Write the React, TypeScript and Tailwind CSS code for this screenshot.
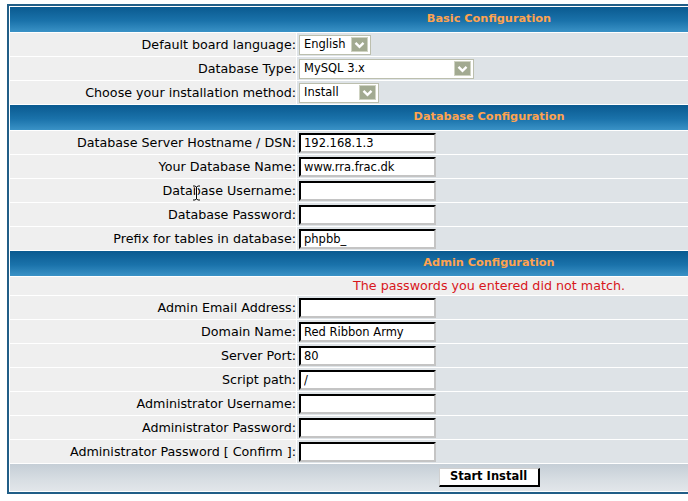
import React from "react";

type Field = { label: string; value?: string; kind?: "text" | "select"; selectWidth?: string };

function Header({ title }: { title: string }) {
  return (
    <div className="h-[25px] flex items-center justify-center bg-[linear-gradient(to_bottom,#0a5a90,#1a72aa_55%,#3a92c6)] text-[11.3px] font-bold text-[#FFA34F]">
      {title}
    </div>
  );
}

function Chevron() {
  return (
    <svg width="11" height="8" viewBox="0 0 11 8">
      <polyline points="1.5,1.8 5.5,5.8 9.5,1.8" fill="none" stroke="#ffffff" strokeWidth="2.4" />
    </svg>
  );
}

function SelectBox({ value, className }: { value: string; className: string }) {
  return (
    <div
      className={`h-[20px] border border-[#bcbfae] bg-white flex items-center justify-between pl-[4px] pr-[2px] text-[11.5px] text-black ${className}`}
    >
      <span>{value}</span>
      <span className="w-[17px] h-[15px] bg-[#a2aa91] border border-[#cfd3c2] flex items-center justify-center">
        <Chevron />
      </span>
    </div>
  );
}

function TextBox({ value }: { value?: string }) {
  return (
    <input
      readOnly
      defaultValue={value ?? ""}
      className="w-[137px] h-[20px] border-2 border-t-black border-l-black border-r-[#c4c4c4] border-b-[#c4c4c4] bg-white px-[3px] text-[11.5px] text-black outline-none"
    />
  );
}

function Row({ field }: { field: Field }) {
  return (
    <div className="flex gap-px h-[23px]">
      <div className="w-[286px] shrink-0 bg-[#EFEFEF] flex items-center justify-end text-[12.7px] text-black">
        {field.label}
      </div>
      <div className="flex-1 bg-[#DEE3E7] flex items-center pl-[2px]">
        {field.kind === "select" ? (
          <SelectBox value={field.value ?? ""} className={field.selectWidth ?? ""} />
        ) : (
          <TextBox value={field.value} />
        )}
      </div>
    </div>
  );
}

const basic: Field[] = [
  { label: "Default board language:", value: "English", kind: "select", selectWidth: "w-[72px]" },
  { label: "Database Type:", value: "MySQL 3.x", kind: "select", selectWidth: "w-[175px]" },
  { label: "Choose your installation method:", value: "Install", kind: "select", selectWidth: "w-[80px]" },
];

const database: Field[] = [
  { label: "Database Server Hostname / DSN:", value: "192.168.1.3" },
  { label: "Your Database Name:", value: "www.rra.frac.dk" },
  { label: "Database Username:" },
  { label: "Database Password:" },
  { label: "Prefix for tables in database:", value: "phpbb_" },
];

const admin: Field[] = [
  { label: "Admin Email Address:" },
  { label: "Domain Name:", value: "Red Ribbon Army" },
  { label: "Server Port:", value: "80" },
  { label: "Script path:", value: "/" },
  { label: "Administrator Username:" },
  { label: "Administrator Password:" },
  { label: "Administrator Password [ Confirm ]:" },
];

export default function App() {
  return (
    <div className="relative w-[688px] h-[501px] overflow-hidden bg-white pt-[4px] pl-[7px] font-['DejaVu_Sans',Verdana,sans-serif]">
      <div className="w-[964px] border-2 border-[#215e87] bg-white p-px flex flex-col gap-px">
        <Header title="Basic Configuration" />
        {basic.map((f) => (
          <Row key={f.label} field={f} />
        ))}
        <Header title="Database Configuration" />
        {database.map((f) => (
          <Row key={f.label} field={f} />
        ))}
        <Header title="Admin Configuration" />
        <div className="h-[18px] bg-[#EFEFEF] flex items-center justify-center text-[12.7px] text-[#d8161b]">
          The passwords you entered did not match.
        </div>
        {admin.map((f) => (
          <Row key={f.label} field={f} />
        ))}
        <div className="h-[27px] bg-[linear-gradient(to_bottom,#c5ced6,#d8dee3_60%,#e2e6ea)] flex items-center justify-center">
          <button className="w-[101px] h-[19px] bg-white border-t border-l border-[#d0d0d0] border-r-2 border-b-2 border-r-black border-b-black text-[11.5px] font-bold text-black leading-none">
            Start Install
          </button>
        </div>
      </div>
      {/* text cursor over the username label */}
      <svg className="absolute left-[192px] top-[185px]" width="9" height="16" viewBox="0 0 9 16">
        <path d="M1 1h2l1.5 1 1.5-1h2M4.5 2v12M1 15h2l1.5-1 1.5 1h2" fill="none" stroke="#ffffff" strokeWidth="2.5" />
        <path d="M1 1h2l1.5 1 1.5-1h2M4.5 2v12M1 15h2l1.5-1 1.5 1h2" fill="none" stroke="#000000" strokeWidth="1" />
      </svg>
    </div>
  );
}
